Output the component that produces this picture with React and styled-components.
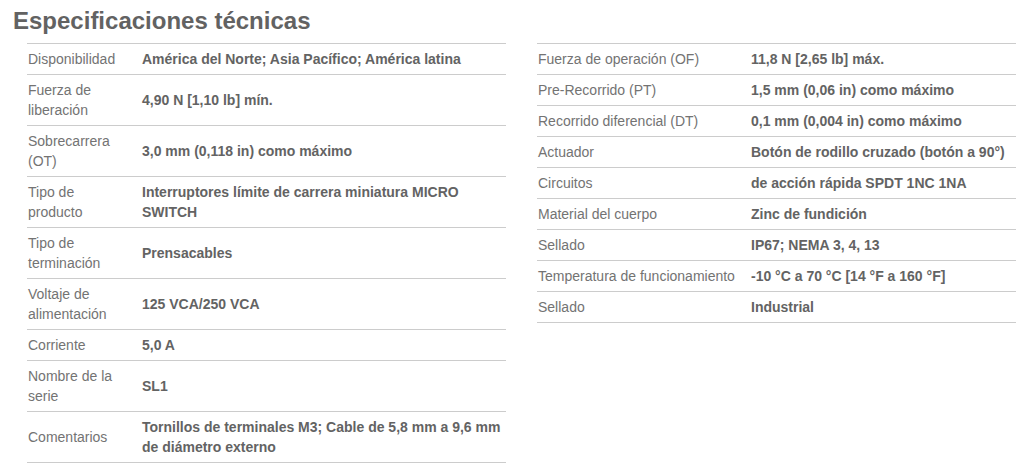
import React from "react";
import styled, { createGlobalStyle } from "styled-components";

const GlobalStyle = createGlobalStyle`
  body {
    margin: 0;
    background: #fff;
    font-family: "Liberation Sans", Arial, sans-serif;
  }
`;

const Page = styled.div`
  width: 1029px;
  padding: 7px 13px 0 13px;
  box-sizing: border-box;
`;

const Title = styled.h2`
  font-size: 24px;
  font-weight: bold;
  color: #626262;
  margin: 0 0 8px 0;
  line-height: 28px;
`;

const Columns = styled.div`
  display: grid;
  grid-template-columns: 479px 479px;
  column-gap: 31px;
  padding-left: 14px;
  align-items: start;
`;

const Table = styled.div`
  border-top: 1px solid #ccc;
`;

const Row = styled.div`
  display: grid;
  grid-template-columns: ${(p) => p.$labelWidth}px 1fr;
  align-items: center;
  border-bottom: 1px solid #ccc;
  padding: 5px 0;
  font-size: 14px;
  line-height: 20px;
`;

const Label = styled.div`
  color: #737373;
  padding: 0 14px 0 1px;
`;

const Value = styled.div`
  color: #636363;
  font-weight: bold;
  padding-right: 5px;
`;

const left = [
  ["Disponibilidad", "América del Norte; Asia Pacífico; América latina"],
  ["Fuerza de liberación", "4,90 N [1,10 lb] mín."],
  ["Sobrecarrera (OT)", "3,0 mm (0,118 in) como máximo"],
  ["Tipo de producto", "Interruptores límite de carrera miniatura MICRO SWITCH"],
  ["Tipo de terminación", "Prensacables"],
  ["Voltaje de alimentación", "125 VCA/250 VCA"],
  ["Corriente", "5,0 A"],
  ["Nombre de la serie", "SL1"],
  ["Comentarios", "Tornillos de terminales M3; Cable de 5,8 mm a 9,6 mm de diámetro externo"],
];

const right = [
  ["Fuerza de operación (OF)", "11,8 N [2,65 lb] máx."],
  ["Pre-Recorrido (PT)", "1,5 mm (0,06 in) como máximo"],
  ["Recorrido diferencial (DT)", "0,1 mm (0,004 in) como máximo"],
  ["Actuador", "Botón de rodillo cruzado (botón a 90°)"],
  ["Circuitos", "de acción rápida SPDT 1NC 1NA"],
  ["Material del cuerpo", "Zinc de fundición"],
  ["Sellado", "IP67; NEMA 3, 4, 13"],
  ["Temperatura de funcionamiento", "-10 °C a 70 °C [14 °F a 160 °F]"],
  ["Sellado", "Industrial"],
];

const SpecTable = ({ rows, labelWidth }) => (
  <Table>
    {rows.map(([label, value], i) => (
      <Row key={i} $labelWidth={labelWidth}>
        <Label>{label}</Label>
        <Value>{value}</Value>
      </Row>
    ))}
  </Table>
);

export default function App() {
  return (
    <Page>
      <GlobalStyle />
      <Title>Especificaciones técnicas</Title>
      <Columns>
        <SpecTable rows={left} labelWidth={115} />
        <SpecTable rows={right} labelWidth={214} />
      </Columns>
    </Page>
  );
}
